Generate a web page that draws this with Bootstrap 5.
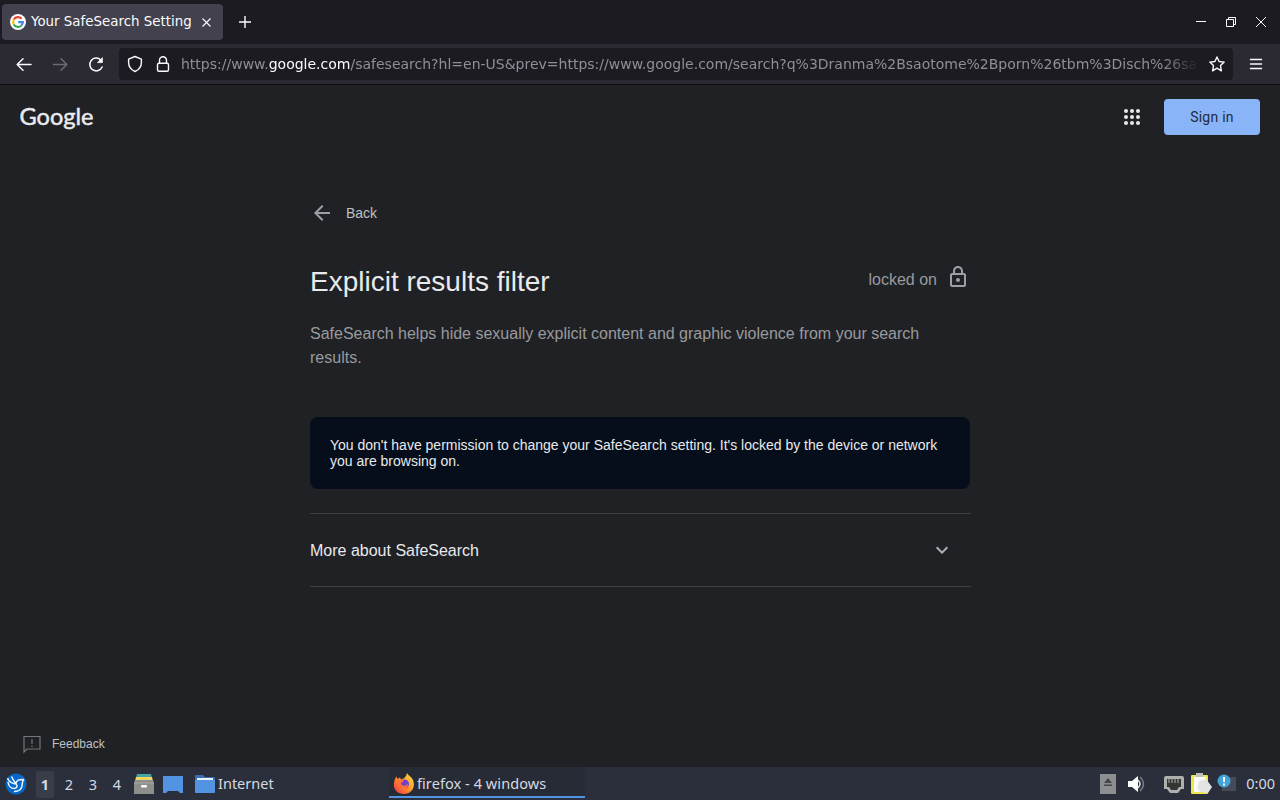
<!DOCTYPE html>
<html lang="en">
  <head>
    <meta charset="UTF-8" />
    <meta name="viewport" content="width=device-width, initial-scale=1.0" />
    <title>Your SafeSearch Setting</title>
    <link
      href="https://cdn.jsdelivr.net/npm/bootstrap@5.3.0/dist/css/bootstrap.min.css"
      rel="stylesheet"
    />
    <style>
      body {
        background: #202124;
        color: #e8eaed;
        font-family: "Liberation Sans", Arial, sans-serif;
      }
      svg {
        display: block;
        flex-shrink: 0;
      }
      .browser-ui {
        font-family: "DejaVu Sans", sans-serif;
        color: #fbfbfe;
      }
      .tab-strip {
        height: 44px;
        background: #1c1b22;
        padding: 4px 9px 4px 2px;
      }
      .browser-tab {
        width: 221px;
        height: 36px;
        padding: 0 8px;
        background: #42414d;
        border-radius: 4px;
        font-size: 13.4px;
      }
      .tab-title {
        margin-left: 5px;
        padding-top: 1px;
      }
      .toolbar {
        height: 41px;
        background: #2b2a33;
        border-bottom: 1px solid #0c0c0d;
        padding: 0 17px 0 14px;
      }
      .address {
        width: 1114px;
        height: 32px;
        margin-left: 13px;
        padding: 0 8px;
        background: #1c1b22;
        border-radius: 4px;
        font-size: 14px;
        color: #8f8f98;
      }
      .address-text {
        width: 1018px;
        margin-left: 10px;
        -webkit-mask-image: linear-gradient(to left, transparent, #000 36px);
        mask-image: linear-gradient(to left, transparent, #000 36px);
      }
      .address-text span {
        color: #fbfbfe;
      }
      .page-header {
        height: 64px;
        padding: 0 20px;
      }
      .sign-in {
        width: 96px;
        height: 36px;
        margin-left: 23px;
        padding: 0;
        background: #8ab4f8;
        color: #202b42;
        border-radius: 4px;
        font: 400 14px/36px Roboto, sans-serif;
        letter-spacing: 0.25px;
      }
      .settings {
        width: 660px;
        margin-top: 52px;
        margin-left: 310px;
      }
      .back-link {
        height: 24px;
        font-size: 14px;
        color: #bdc1c6;
      }
      .filter-row {
        height: 36px;
        margin-top: 39px;
      }
      .settings h1 {
        font-size: 28px;
        line-height: 36px;
        font-weight: 400;
      }
      .muted {
        color: #989a9e;
        font-size: 16px;
        line-height: 24px;
      }
      .filter-state {
        margin-right: -1px;
      }
      .filter-state svg {
        margin-top: 1px;
      }
      .filter-text {
        margin-top: 22px;
      }
      .notice {
        height: 72px;
        margin-top: 47px;
        padding: 20px;
        background: #050e1a;
        border-radius: 8px;
        font-size: 14px;
        line-height: 16px;
      }
      .more-row {
        width: 661px;
        height: 74px;
        margin-top: 24px;
        border-top: 1px solid #3c4043;
        border-bottom: 1px solid #3c4043;
        padding-right: 17px;
      }
      .more-row span {
        padding-top: 2px;
      }
      .feedback {
        padding: 0 0 11px 20px;
        font-size: 12px;
        color: #bdc1c6;
      }
      .taskbar {
        height: 33px;
        background: #2b2f3b;
        color: #d3dae3;
        font-family: "Noto Sans", sans-serif;
        font-size: 14.5px;
        padding: 0 5px;
      }
      .desktops {
        margin-left: 6px;
        padding-top: 2px;
      }
      .desktop-no {
        width: 24px;
        height: 27px;
        line-height: 27px;
        text-align: center;
      }
      .desktop-no.current {
        width: 18px;
        margin: 0 3px;
        background: #393d4a;
        font-weight: 700;
        border-radius: 2px;
      }
      .task-item {
        width: 198px;
        white-space: nowrap;
      }
      .task-item .task-label {
        margin-left: 3px;
        padding-top: 1px;
      }
      .task-item.current {
        width: 196px;
        height: 31px;
        margin-bottom: 2px;
        padding: 4px 0 0 4px;
        background: #272b36;
        border-bottom: 2px solid #5294e2;
        letter-spacing: 0.07px;
      }
      .task-item.current .task-label {
        margin-left: 2px;
      }
      .clock {
        margin-left: 9px;
      }
    </style>
  </head>
  <body class="d-flex flex-column vh-100 overflow-hidden">
    <div class="browser-ui">
      <div class="tab-strip d-flex align-items-center">
        <div class="browser-tab d-flex align-items-center">
          <svg width="16" height="16" viewBox="0 0 16 16">
            <circle cx="8" cy="8" r="8" fill="#fff" />
            <g fill="none" stroke-width="2.1">
              <path d="M3.8 5.5A4.9 4.9 0 0 1 11.6 4.7" stroke="#ea4335" />
              <path d="M3.8 5.5A4.9 4.9 0 0 0 3.8 10.5" stroke="#fbbc05" />
              <path d="M3.8 10.5A4.9 4.9 0 0 0 11.2 11.7" stroke="#34a853" />
              <path d="M11.2 11.7A4.9 4.9 0 0 0 12.9 8.1H8.2" stroke="#4285f4" />
            </g>
          </svg>
          <span class="tab-title text-nowrap">Your SafeSearch Setting</span>
          <svg class="ms-auto me-1" width="9" height="9" viewBox="0 0 9 9" stroke="#fbfbfe" stroke-width="1.1">
            <path d="M.5 .5l8 8M8.5 .5l-8 8" />
          </svg>
        </div>
        <svg class="ms-3" width="12" height="12" viewBox="0 0 12 12" stroke="#fbfbfe" stroke-width="1.4">
          <path d="M6 0v12M0 6h12" />
        </svg>
        <div class="d-flex align-items-center ms-auto me-1">
          <svg width="72" height="12" viewBox="0 0 72 12" fill="none" stroke="#fbfbfe">
            <path d="M1 5.5h10" />
            <path d="M31.5 3.5h7v7h-7zM33.5 3.5v-2h7v7h-2" />
            <path d="M61 1l10 10M71 1l-10 10" />
          </svg>
        </div>
      </div>
      <div class="toolbar d-flex align-items-center">
        <svg width="92" height="20" viewBox="0 0 92 20" fill="none" stroke="#fbfbfe" stroke-width="1.5" stroke-linecap="round" stroke-linejoin="round">
          <path d="M17 10.5H3.2M9 4.7L3.2 10.5L9 16.3" />
          <path d="M39.5 10.5h13.3M47 4.7l5.8 5.8L47 16.3" stroke="#6d6c75" />
          <path d="M88.1 13A6.4 6.4 0 1 1 86.8 6" />
          <path d="M88.4 4v4.6h-4.6z" fill="#fbfbfe" stroke-width=".8" />
        </svg>
        <div class="address d-flex align-items-center">
          <svg width="44" height="18" viewBox="0 0 44 18" fill="none" stroke="#fbfbfe" stroke-width="1.4" stroke-linejoin="round">
            <path d="M8 1.5L14.4 4.1V7.4C14.4 11.6 11.9 14.7 8 16.5C4.1 14.7 1.6 11.6 1.6 7.4V4.1z" />
            <rect x="30.5" y="8.2" width="11" height="8" rx="1.5" />
            <path d="M32.5 8.2V5.2a3.5 3.5 0 0 1 7 0V8.2" />
          </svg>
          <div class="address-text text-nowrap">https://www.<span>google.com</span>/safesearch?hl=en-US&amp;prev=https://www.google.com/search?q%3Dranma%2Bsaotome%2Bporn%26tbm%3Disch%26sa</div>
          <svg class="ms-auto" width="16" height="16" viewBox="0 0 16 16" fill="none" stroke="#fbfbfe" stroke-width="1.4" stroke-linejoin="round">
            <path d="M8 1L10.1 5.5L15.2 6.1L11.5 9.6L12.4 14.8L8 12.2L3.6 14.8L4.5 9.6L.8 6.1L5.9 5.5z" />
          </svg>
        </div>
        <svg class="ms-auto" width="14" height="12" viewBox="0 0 14 12" stroke="#fbfbfe" stroke-width="1.4" stroke-linecap="round">
          <path d="M1.5 1.5h11M1.5 6h11M1.5 10.5h11" />
        </svg>
      </div>
    </div>

    <main class="flex-grow-1 d-flex flex-column">
      <header class="page-header d-flex align-items-center">
        <svg width="80" height="40" viewBox="0 0 80 40">
          <text x="-0.5" y="28" textLength="74" lengthAdjust="spacingAndGlyphs" font-family="Lato, sans-serif" font-size="23.5" fill="#e8eaed" stroke="#e8eaed" stroke-width=".5">Google</text>
        </svg>
        <svg class="ms-auto" width="18" height="18" viewBox="0 0 18 18" fill="#e8eaed">
          <circle cx="3" cy="3" r="2" /><circle cx="9" cy="3" r="2" /><circle cx="15" cy="3" r="2" />
          <circle cx="3" cy="9" r="2" /><circle cx="9" cy="9" r="2" /><circle cx="15" cy="9" r="2" />
          <circle cx="3" cy="15" r="2" /><circle cx="9" cy="15" r="2" /><circle cx="15" cy="15" r="2" />
        </svg>
        <a href="#" class="btn sign-in border-0">Sign in</a>
      </header>

      <section class="settings">
        <div class="back-link d-flex align-items-center">
          <svg width="24" height="24" viewBox="0 0 24 24" fill="#9aa0a6">
            <path d="M20 11H7.83l5.59-5.59L12 4l-8 8 8 8 1.41-1.41L7.83 13H20v-2z" />
          </svg>
          <span class="ms-2 ps-1">Back</span>
        </div>
        <div class="filter-row d-flex">
          <h1 class="mb-0">Explicit results filter</h1>
          <div class="filter-state d-flex ms-auto">
            <span class="muted pt-1">locked on</span>
            <svg class="ms-2" width="26" height="24" viewBox="0 0 24 24" fill="#9aa0a6">
              <path d="M18 8h-1V6c0-2.76-2.24-5-5-5S7 3.24 7 6v2H6c-1.1 0-2 .9-2 2v10c0 1.1.9 2 2 2h12c1.1 0 2-.9 2-2V10c0-1.1-.9-2-2-2zM9 6c0-1.66 1.34-3 3-3s3 1.34 3 3v2H9V6zm9 14H6V10h12v10zm-6-3c1.1 0 2-.9 2-2s-.9-2-2-2-2 .9-2 2 .9 2 2 2z" />
            </svg>
          </div>
        </div>
        <p class="filter-text muted mb-0">SafeSearch helps hide sexually explicit content and graphic violence from your search results.</p>
        <div class="notice">You don't have permission to change your SafeSearch setting. It's locked by the device or network you are browsing on.</div>
        <div class="more-row d-flex align-items-center justify-content-between">
          <span>More about SafeSearch</span>
          <svg width="24" height="24" viewBox="0 0 24 24" fill="#aeb2b7">
            <path d="M7.41 8.59L12 13.17l4.59-4.58L18 10l-6 6-6-6z" />
          </svg>
        </div>
      </section>

      <div class="feedback d-flex align-items-center mt-auto">
        <svg width="24" height="24" viewBox="0 0 24 24" fill="none" stroke="#74777b" stroke-width="1.2">
          <path d="M4 20V4.500H20V17H7z" />
          <path d="M12 7v5M12 13.500v1.500" />
        </svg>
        <span class="ms-2">Feedback</span>
      </div>
    </main>

    <footer class="taskbar d-flex align-items-center">
      <svg width="22" height="22" viewBox="0 0 22 22">
        <circle cx="11" cy="11" r="10.5" fill="#0568c7" />
        <path d="M2.5 5C4 9 7 10.5 11 11C11 8 13 6 19 6.5C16.5 7.5 18 11 16.5 14.5C15 18 11.5 18.5 9 18.5M11 11C13 13 12 15 9.5 15.5C5.5 15.5 3.5 12.5 3 9M6.5 3.5C7.5 6 9 8 11 11" fill="none" stroke="#e8f3ff" stroke-width="1.5" />
      </svg>
      <div class="desktops d-flex">
        <div class="desktop-no current">1</div>
        <div class="desktop-no">2</div>
        <div class="desktop-no">3</div>
        <div class="desktop-no">4</div>
      </div>
      <svg class="ms-1" width="22" height="22" viewBox="0 0 22 22">
        <path d="M4 1h14l1 4H3z" fill="#45a6a0" />
        <path d="M3 4h16l1 4H2z" fill="#f5d565" />
        <path d="M2 7h18l1 3v11H1V10z" fill="#8e8e8c" />
        <path d="M1 10h20" stroke="#a8a8a5" />
        <rect x="8" y="12" width="6" height="2.5" rx="1" fill="#fff" />
      </svg>
      <svg class="ms-2" width="20" height="18" viewBox="0 0 20 18">
        <path d="M0 1h20v17h-3l-2-2H5l-2 2H0z" fill="#5294e2" />
      </svg>
      <div class="task-item d-flex align-items-center ms-2 ps-1">
        <svg width="20" height="20" viewBox="0 0 20 20">
          <path d="M0 2q0-1 1-1h7l2 2h9q1 0 1 1v14q0 1-1 1H1q-1 0-1-1z" fill="#3a6cae" />
          <path d="M2 4h16v3H2z" fill="#e9f1fb" />
          <path d="M0 6h20v12q0 1-1 1H1q-1 0-1-1z" fill="#5294e2" />
        </svg>
        <span class="task-label">Internet</span>
      </div>
      <div class="task-item current d-flex align-items-center">
        <svg width="22" height="22" viewBox="0 0 22 22">
          <defs>
            <linearGradient id="fox" x1="1" y1="0" x2="0" y2="1">
              <stop offset="0" stop-color="#ffe04a" />
              <stop offset=".5" stop-color="#ff9528" />
              <stop offset="1" stop-color="#f0284f" />
            </linearGradient>
          </defs>
          <path d="M14 0c1 2.5 4 3 6 7c3 8-2 14-9 14C4 21 0 16 1 10C1.5 7 2 5 3.5 3.5L4.5 6L7 4.5L8 6.5C11 6 13 4 14 0z" fill="url(#fox)" />
          <circle cx="11.5" cy="11" r="4.5" fill="#6e43c8" />
          <path d="M5 7c3-1 4 0 6 1l-3 2c0 3 4 4 7 1c0 4-3 6-6 5c-4-1-5-5-4-9z" fill="#ff7139" />
        </svg>
        <span class="task-label">firefox - 4 windows</span>
      </div>
      <div class="d-flex align-items-center ms-auto">
        <svg width="137" height="24" viewBox="0 0 137 24">
          <rect width="16" height="20" x="0" y="2" fill="#8d8e90" />
          <path d="M4 11l4-5 4 5zM4 12.5h8v1.5H4z" fill="#45474c" />
          <path d="M28 9h4l6-5v16l-6-5h-4z" fill="#fff" />
          <path d="M38 8q4 4 0 8" fill="none" stroke="#dfe2e8" stroke-width="1.5" />
          <path d="M40 5q7 7 0 14" fill="none" stroke="#737985" stroke-width="1.5" />
          <path d="M66 4h16q2 0 2 2v11h-3l-3 4h-8l-3-4h-3V6q0-2 2-2z" fill="#aeb0ae" />
          <path d="M67 7h14v8h-2l-2 3h-6l-2-3h-2z" fill="#343633" />
          <path d="M69 7v4M72 7v4M75 7v4M78 7v4" stroke="#aeb0ae" />
          <rect x="91" y="3" width="17" height="19" rx="1" fill="#ece64c" />
          <path d="M94 5h12v15H94z" fill="#fafafa" />
          <path d="M96 1h7v4h-7z" fill="#bfc0ba" />
          <path d="M99 9l7-2 6 8-4 6-8-1-3-4z" fill="#e4e4e4" />
          <rect x="122" y="5" width="14" height="14" fill="#454c57" />
          <circle cx="124" cy="9" r="6.5" fill="#42a5da" />
          <path d="M124 5v5M124 11.5v2" stroke="#fff" stroke-width="2" />
        </svg>
        <span class="clock">0:00</span>
      </div>
    </footer>

    <script src="https://cdn.jsdelivr.net/npm/bootstrap@5.3.0/dist/js/bootstrap.bundle.min.js"></script>
  </body>
</html>
